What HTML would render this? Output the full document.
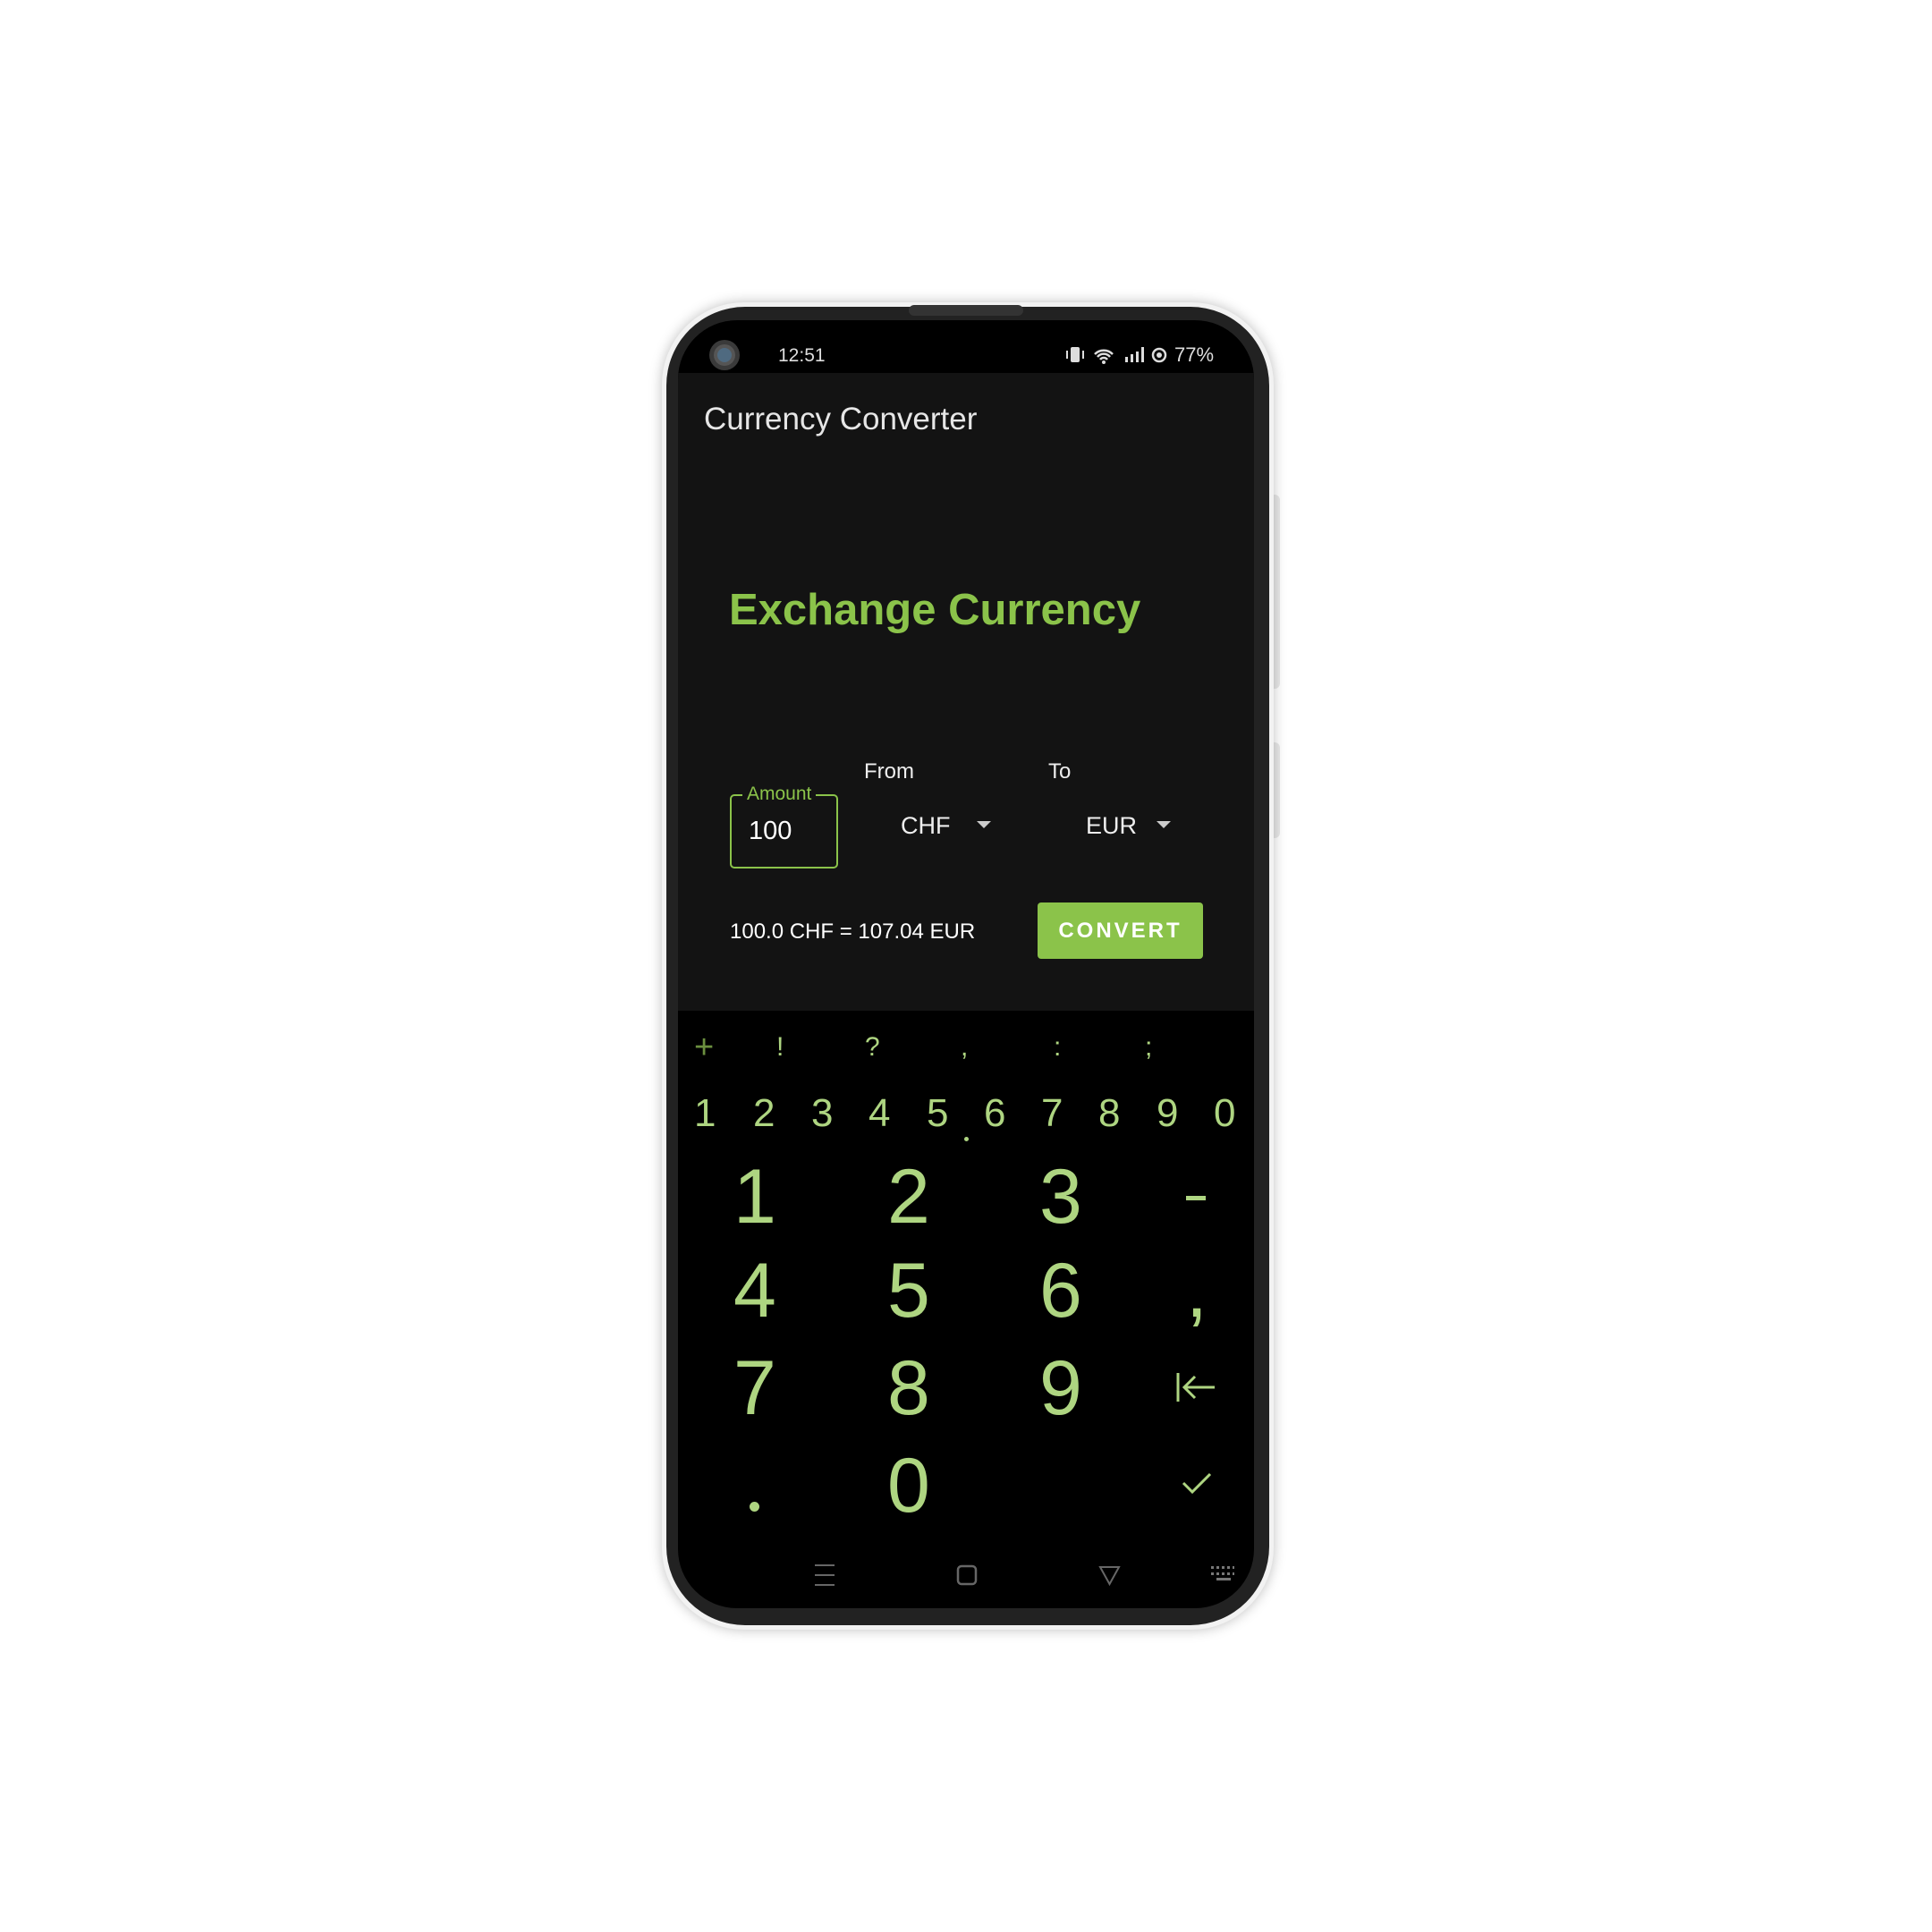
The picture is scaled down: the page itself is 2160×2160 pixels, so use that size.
<!DOCTYPE html>
<html><head><meta charset="utf-8"><style>
*{margin:0;padding:0;box-sizing:border-box}
body{width:2160px;height:2160px;background:#fff;position:relative;overflow:hidden;font-family:"Liberation Sans",Roboto,sans-serif}
.a{position:absolute}
.phone{left:740px;top:338px;width:684px;height:1484px;border-radius:92px;background:#f2f2f2;box-shadow:0 0 14px rgba(0,0,0,.25)}
.bezel{left:745px;top:343px;width:674px;height:1474px;border-radius:88px;background:#222}
.screen{left:758px;top:358px;width:644px;height:1440px;border-radius:66px;background:#000;overflow:hidden}
.t{white-space:nowrap;line-height:1}
.g{color:#aed581}
</style></head><body>
<div class="a" style="left:1423px;top:553px;width:8px;height:217px;background:#e8e8e8;border-radius:0 6px 6px 0"></div>
<div class="a" style="left:1423px;top:830px;width:8px;height:107px;background:#e8e8e8;border-radius:0 6px 6px 0"></div>
<div class="a phone"></div>
<div class="a bezel"></div>
<div class="a" style="left:1016px;top:341px;width:128px;height:12px;border-radius:6px;background:#333"></div>
<div class="a screen">
  <div class="a" style="left:0;top:59px;width:644px;height:713px;background:#131313"></div>
</div>
<!-- camera -->
<div class="a" style="left:793px;top:380px;width:34px;height:34px;border-radius:50%;background:#3a3a3a"></div>
<div class="a" style="left:798px;top:385px;width:24px;height:24px;border-radius:50%;background:#555"></div>
<div class="a" style="left:802px;top:389px;width:16px;height:16px;border-radius:50%;background:#4f6a80"></div>
<div class="a t" style="left:870px;top:387px;font-size:21px;color:#ddd">12:51</div>
<svg class="a" style="left:1190px;top:384px" width="170" height="26" viewBox="0 0 170 26">
 <rect x="7" y="4" width="10" height="17" rx="2" fill="#ddd"/>
 <path d="M3 8v9M21 8v9" stroke="#ddd" stroke-width="2"/>
 <path d="M34 12a14 14 0 0 1 20 0M37 15a9 9 0 0 1 14 0M40 18a5 5 0 0 1 8 0" stroke="#ddd" stroke-width="2.5" fill="none"/>
 <circle cx="44" cy="21" r="2" fill="#ddd"/>
 <rect x="68" y="15" width="3" height="6" fill="#ddd"/><rect x="74" y="12" width="3" height="9" fill="#ddd"/><rect x="80" y="9" width="3" height="12" fill="#ddd"/><rect x="86" y="4" width="3" height="17" fill="#ddd"/>
 <circle cx="106" cy="13" r="7" stroke="#ddd" stroke-width="2.5" fill="none"/><circle cx="106" cy="13" r="3" fill="#ddd"/>
</svg>
<div class="a t" style="left:1313px;top:386px;font-size:22px;color:#ddd">77%</div>

<div class="a t" style="left:787px;top:451px;font-size:35px;color:#e6e6e6">Currency Converter</div>
<div class="a t" style="left:815px;top:658px;font-size:49px;color:#8bc34a;font-weight:bold">Exchange Currency</div>
<div class="a t" style="left:966px;top:851px;font-size:24px;color:#eee">From</div>
<div class="a t" style="left:1172px;top:851px;font-size:24px;color:#eee">To</div>
<div class="a" style="left:816px;top:888px;width:121px;height:83px;border:2.5px solid #8bc34a;border-radius:5px"></div>
<div class="a t" style="left:830px;top:877px;font-size:21px;color:#8bc34a;background:#131313;padding:0 5px">Amount</div>
<div class="a t" style="left:837px;top:915px;font-size:29px;color:#fff">100</div>
<div class="a t" style="left:1007px;top:910px;font-size:27px;color:#eee">CHF</div>
<div class="a" style="left:1092px;top:918px;border-left:8px solid transparent;border-right:8px solid transparent;border-top:8px solid #ccc"></div>
<div class="a t" style="left:1214px;top:910px;font-size:27px;color:#eee">EUR</div>
<div class="a" style="left:1293px;top:918px;border-left:8px solid transparent;border-right:8px solid transparent;border-top:8px solid #ccc"></div>
<div class="a t" style="left:816px;top:1030px;font-size:24px;color:#fff">100.0 CHF = 107.04 EUR</div>
<div class="a" style="left:1160px;top:1009px;width:185px;height:63px;background:#8bc34a;border-radius:4px"></div>
<div class="a t" style="left:1160px;top:1029px;width:185px;text-align:center;font-size:24px;font-weight:bold;color:#fff;letter-spacing:3px">CONVERT</div>

<!-- keyboard -->
<div class="a t" style="left:776px;top:1152px;font-size:38px;color:#6b8f3f">+</div>
<div class="a t g" style="left:868px;top:1156px;font-size:30px">!</div>
<div class="a t g" style="left:967px;top:1156px;font-size:30px">?</div>
<div class="a t g" style="left:1074px;top:1156px;font-size:30px">,</div>
<div class="a t g" style="left:1178px;top:1156px;font-size:30px">:</div>
<div class="a t g" style="left:1280px;top:1156px;font-size:30px">;</div>
<div class="a" style="left:776px;top:1223px;width:610px;height:50px">
 <span class="a t g" style="left:0;font-size:44px">1</span><span class="a t g" style="left:66px;font-size:44px">2</span><span class="a t g" style="left:131px;font-size:44px">3</span><span class="a t g" style="left:195px;font-size:44px">4</span><span class="a t g" style="left:260px;font-size:44px">5</span><span class="a t g" style="left:324px;font-size:44px">6</span><span class="a t g" style="left:388px;font-size:44px">7</span><span class="a t g" style="left:452px;font-size:44px">8</span><span class="a t g" style="left:517px;font-size:44px">9</span><span class="a t g" style="left:581px;font-size:44px">0</span>
</div>
<div class="a" style="left:1078px;top:1271px;width:5px;height:5px;border-radius:50%;background:#aed581"></div>
<div class="a t g" style="left:820px;top:1295px;font-size:86px">1</div>
<div class="a t g" style="left:992px;top:1295px;font-size:86px">2</div>
<div class="a t g" style="left:1162px;top:1295px;font-size:86px">3</div>
<div class="a" style="left:1326px;top:1337px;width:22px;height:5px;background:#aed581"></div>
<div class="a t g" style="left:820px;top:1400px;font-size:86px">4</div>
<div class="a t g" style="left:992px;top:1400px;font-size:86px">5</div>
<div class="a t g" style="left:1162px;top:1400px;font-size:86px">6</div>
<div class="a t g" style="left:1326px;top:1400px;font-size:86px">,</div>
<div class="a t g" style="left:820px;top:1509px;font-size:86px">7</div>
<div class="a t g" style="left:992px;top:1509px;font-size:86px">8</div>
<div class="a t g" style="left:1162px;top:1509px;font-size:86px">9</div>
<svg class="a" style="left:1314px;top:1532px" width="48" height="38" viewBox="0 0 48 38"><path d="M3 3v32M44 19H10M22 7L10 19l12 12" stroke="#aed581" stroke-width="3" fill="none"/></svg>
<div class="a" style="left:838px;top:1679px;width:11px;height:11px;border-radius:50%;background:#aed581"></div>
<div class="a t g" style="left:992px;top:1618px;font-size:86px">0</div>
<svg class="a" style="left:1320px;top:1643px" width="36" height="30" viewBox="0 0 36 30"><path d="M3 15l10 10L33 5" stroke="#aed581" stroke-width="3" fill="none"/></svg>
<!-- nav -->
<svg class="a" style="left:900px;top:1740px" width="480" height="42" viewBox="900 1722 480 42">
 <path d="M911 1732h22M911 1743h22M911 1754h22" stroke="#666" stroke-width="2"/>
 <rect x="1071" y="1733" width="20" height="20" rx="4" stroke="#666" stroke-width="2.5" fill="none"/>
 <path d="M1230 1734h21l-10.5 19z" stroke="#666" stroke-width="2" fill="none"/>
 <g fill="#777"><rect x="1354" y="1733" width="3" height="3"/><rect x="1360" y="1733" width="3" height="3"/><rect x="1366" y="1733" width="3" height="3"/><rect x="1372" y="1733" width="3" height="3"/><rect x="1378" y="1733" width="3" height="3"/><rect x="1354" y="1740" width="3" height="3"/><rect x="1360" y="1740" width="3" height="3"/><rect x="1366" y="1740" width="3" height="3"/><rect x="1372" y="1740" width="3" height="3"/><rect x="1378" y="1740" width="3" height="3"/><rect x="1360" y="1746" width="16" height="3"/></g>
</svg>
</body></html>
